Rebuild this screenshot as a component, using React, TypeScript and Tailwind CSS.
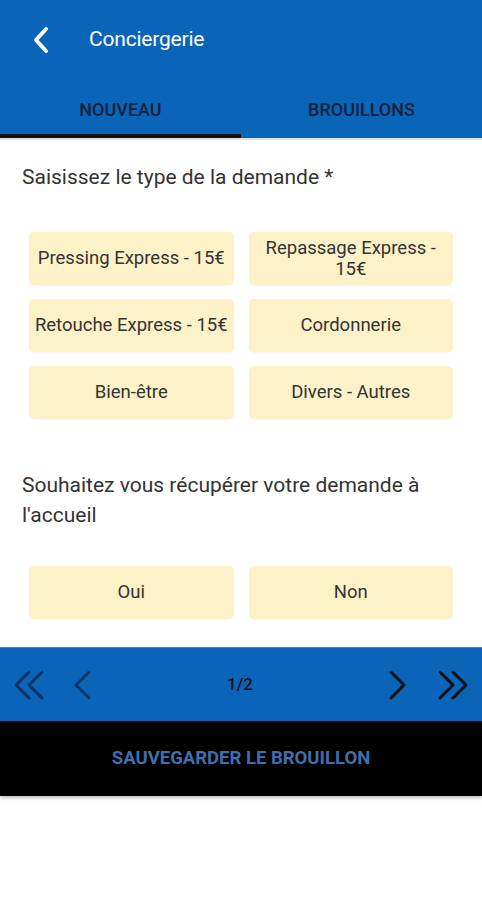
import React from 'react'

const types = [
  ['Pressing Express - 15€', 'Repassage Express - 15€'],
  ['Retouche Express - 15€', 'Cordonnerie'],
  ['Bien-être', 'Divers - Autres'],
]

function Choice({ label }: { label: string }) {
  return (
    <button
      type="button"
      className="flex h-[53px] items-center justify-center rounded-[5px] bg-[#fdf1c8] px-[1px] text-center text-[18.5px] leading-[21px] text-[#333] shadow-[0_1px_1px_rgba(0,0,0,0.04)]"
    >
      {label}
    </button>
  )
}

export default function App() {
  return (
    <div className="flex h-[900px] w-[482px] flex-col bg-white font-['Roboto',sans-serif]">
      {/* Header */}
      <div className="bg-[#0a64b8]">
        <div className="flex h-20 items-center">
          <svg className="ml-[31px] h-7 w-5" viewBox="0 0 20 28" fill="none" stroke="white" strokeWidth={4} strokeLinecap="round" strokeLinejoin="round">
            <path d="M15 3L5 14l10 11" />
          </svg>
          <span className="ml-[38px] text-[21px] tracking-[-0.2px] text-white">Conciergerie</span>
        </div>
        <div className="flex h-[58px]">
          <div className="flex flex-1 items-center justify-center border-b-[4px] border-[#111] pt-1 text-[18px] font-medium text-[#16213a]">
            NOUVEAU
          </div>
          <div className="flex flex-1 items-center justify-center border-b-[4px] border-transparent pt-1 text-[18px] font-medium text-[#16213a]">
            BROUILLONS
          </div>
        </div>
      </div>
      <div className="h-[2px] bg-[#d6e4f2]" />

      {/* Content */}
      <div className="pt-[22px]">
        <p className="px-[22px] text-[21px] leading-[30px] text-[#333]">Saisissez le type de la demande *</p>
        <div className="mt-10 grid grid-cols-2 gap-x-[15px] gap-y-[14px] px-[29px]">
          {types.flat().map((t) => (
            <Choice key={t} label={t} />
          ))}
        </div>
        <p className="mt-[51px] pr-[40px] pl-[22px] text-[21px] leading-[30px] text-[#333]">
          Souhaitez vous récupérer votre demande à l'accueil
        </p>
        <div className="mt-9 grid grid-cols-2 gap-x-[15px] px-[29px]">
          <Choice label="Oui" />
          <Choice label="Non" />
        </div>
      </div>

      {/* Pagination */}
      <div className="mt-7 flex h-[74px] items-center border-t border-[#3d86cf] bg-[#0a64b8] px-[12px]">
        <svg className="h-[32px] w-[34px]" viewBox="0 0 34 32" fill="none" stroke="#0e3463" strokeWidth={3} strokeLinecap="round" strokeLinejoin="round">
          <path d="M17 3L4 16l13 13" />
          <path d="M30 3L17 16l13 13" />
        </svg>
        <svg className="ml-[26px] h-[32px] w-[20px]" viewBox="0 0 20 32" fill="none" stroke="#0e3463" strokeWidth={3} strokeLinecap="round" strokeLinejoin="round">
          <path d="M17 3L4 16l13 13" />
        </svg>
        <span className="flex-1 text-center text-[17px] font-medium text-[#111]">1/2</span>
        <svg className="mr-[28px] h-[32px] w-[20px]" viewBox="0 0 20 32" fill="none" stroke="#111" strokeWidth={3} strokeLinecap="round" strokeLinejoin="round">
          <path d="M3 3l13 13L3 29" />
        </svg>
        <svg className="h-[32px] w-[34px]" viewBox="0 0 34 32" fill="none" stroke="#111" strokeWidth={3} strokeLinecap="round" strokeLinejoin="round">
          <path d="M4 3l13 13L4 29" />
          <path d="M17 3l13 13-13 13" />
        </svg>
      </div>

      {/* Save draft */}
      <button
        type="button"
        className="flex h-[75px] w-full items-center justify-center bg-black text-[18.5px] font-bold text-[#3f6fae] shadow-[0_2px_3px_rgba(0,0,0,0.25)]"
      >
        SAUVEGARDER LE BROUILLON
      </button>
    </div>
  )
}
